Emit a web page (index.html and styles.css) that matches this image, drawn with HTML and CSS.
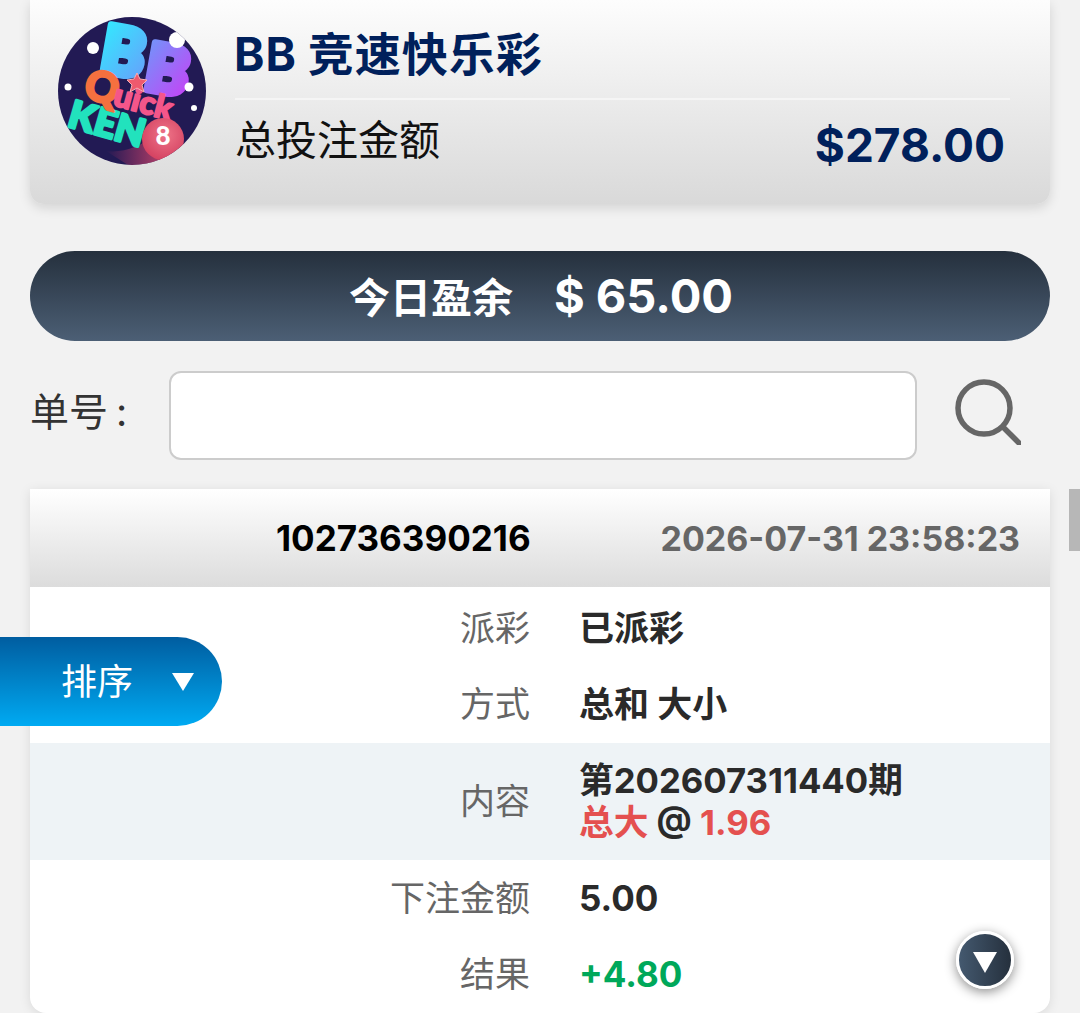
FILE: index.html
```html
<!DOCTYPE html>
<html lang="zh-CN">
<head>
<meta charset="utf-8">
<title>BB 竞速快乐彩</title>
<link rel="stylesheet" href="styles.css">
</head>
<body>
<main class="page">
  <section class="summary">
    <svg class="logo" viewBox="0 0 148 148" aria-label="BB Quick KENO">
      <defs>
        <linearGradient id="bbOne" x1="0" y1="0" x2="1" y2="1">
          <stop offset="0" stop-color="#2ef0ff"/><stop offset="1" stop-color="#6a9cfb"/>
        </linearGradient>
        <linearGradient id="bbTwo" x1="0" y1="0" x2="1" y2="1">
          <stop offset="0" stop-color="#6a9cfb"/><stop offset="1" stop-color="#cc3cf5"/>
        </linearGradient>
        <radialGradient id="ball" cx=".55" cy=".4" r=".65">
          <stop offset="0" stop-color="#ee7488"/><stop offset="1" stop-color="#d33f5f"/>
        </radialGradient>
        <linearGradient id="trail" x1="0" y1="0" x2="1" y2="0">
          <stop offset="0" stop-color="#d33f6a" stop-opacity="0"/><stop offset="1" stop-color="#d84a6c"/>
        </linearGradient>
        <clipPath id="round"><circle cx="74" cy="74" r="74"/></clipPath>
      </defs>
      <g clip-path="url(#round)">
        <rect width="148" height="148" fill="#221a54"/>
        <path d="M48 134 C66 136 82 130 100 116 L118 148 L70 148Z" fill="url(#trail)"/>
        <text class="logo-bb" transform="translate(40 54) rotate(10)" fill="url(#bbOne)" stroke="url(#bbOne)">B</text>
        <text class="logo-bb" transform="translate(84 72) rotate(10)" fill="url(#bbTwo)" stroke="url(#bbTwo)">B</text>
        <text class="logo-ken" transform="translate(8 109) rotate(16)">KEN</text>
        <g transform="translate(24 80) rotate(15)">
          <text class="logo-q">Q</text>
          <text class="logo-uick" x="31">uick</text>
        </g>
        <polygon points="79,56 82,62 89,63 84,68 86,75 79,71 72,75 74,68 69,63 76,62" fill="#ef5a6e" stroke="#f7b0b4" stroke-width="1"/>
        <circle cx="105" cy="122" r="21" fill="url(#ball)"/>
        <text class="logo-eight" x="105" y="128">8</text>
        <circle cx="35" cy="31" r="6" fill="#fff"/><circle cx="119" cy="23" r="8" fill="#fff"/>
        <circle cx="10" cy="70" r="3.5" fill="#fff"/><circle cx="131" cy="70" r="4.5" fill="#fff"/><circle cx="136" cy="91" r="3" fill="#fff"/>
      </g>
    </svg>
    <div class="summary-body">
      <h1 class="game-title">BB 竞速快乐彩</h1>
      <div class="summary-row">
        <span class="summary-label">总投注金额</span>
        <span class="summary-amount">$278.00</span>
      </div>
    </div>
  </section>

  <section class="profit-bar">
    <span>今日盈余</span>
    <span class="profit-value">$ 65.00</span>
  </section>

  <form class="search">
    <label class="search-label" for="order">单号 :</label>
    <input class="search-input" id="order" type="text">
    <svg class="search-icon" viewBox="0 0 66 66" aria-hidden="true">
      <circle cx="29" cy="29" r="26" fill="none" stroke="#666" stroke-width="5.5"/>
      <path d="M48 48 L64 64" fill="none" stroke="#666" stroke-width="5.5" stroke-linecap="round"/>
    </svg>
  </form>

  <article class="record">
    <header class="record-head">
      <span class="record-id">102736390216</span>
      <time class="record-time">2026-07-31 23:58:23</time>
    </header>
    <dl class="record-rows">
      <div class="row"><dt>派彩</dt><dd>已派彩</dd></div>
      <div class="row"><dt>方式</dt><dd>总和 大小</dd></div>
      <div class="row row-shade"><dt>内容</dt><dd class="stack"><span>第202607311440期</span><span><b class="red">总大</b> @ <b class="red">1.96</b></span></dd></div>
      <div class="row"><dt>下注金额</dt><dd class="num">5.00</dd></div>
      <div class="row"><dt>结果</dt><dd class="num green">+4.80</dd></div>
    </dl>
  </article>
</main>

<div class="scroll-thumb"></div>
<button class="sort-btn" type="button"><span>排序</span><i class="sort-arrow"></i></button>
<button class="down-btn" type="button" aria-label="向下"><i class="down-arrow"></i></button>
</body>
</html>
```

FILE: styles.css
```css
* { box-sizing: border-box; }
html, body { margin: 0; height: 100%; overflow: hidden; }
body {
  background: #f2f2f2;
  font-family: Inter, "Noto Sans CJK SC", sans-serif;
  color: #222;
}
.page { padding: 0 30px; display: flex; flex-direction: column; }

.summary {
  height: 204px;
  display: flex;
  align-items: flex-start;
  padding: 17px 40px 0 28px;
  border-radius: 0 0 14px 14px;
  background: linear-gradient(#fdfdfd, #d9d9d9);
  box-shadow: 0 4px 12px rgba(0,0,0,.13);
}
.logo { width: 148px; height: 148px; flex: none; }
.logo text { font-family: Lato, Inter, sans-serif; font-weight: 900; stroke-linejoin: round; }
.logo-bb { font-size: 66px; stroke-width: 7px; }
.logo-q { font-size: 42px; fill: #f5703f; stroke: #f5703f; stroke-width: 2.5px; }
.logo-uick { font-size: 32px; fill: #f4568a; stroke: #f4568a; stroke-width: 2px; }
.logo-ken { font-size: 38px; fill: #22e2bd; stroke: #22e2bd; stroke-width: 3px; }
.logo-eight { font-size: 26px; text-anchor: middle; fill: #fff; }
.summary-body { flex: 1; margin-left: 29px; }
.game-title {
  margin: 0;
  height: 83px;
  border-bottom: 2px solid #f5f5f5;
  font-size: 46px;
  line-height: 74px;
  font-weight: 700;
  color: #00205b;
  letter-spacing: 1px;
  text-indent: -1px;
  word-spacing: -1px;
}
.summary-row { display: flex; justify-content: space-between; padding-right: 5px; }
.summary-label { font-size: 41px; line-height: 80px; color: #111; }
.summary-amount { font-size: 46px; line-height: 90px; font-weight: 700; color: #00205b; }

.profit-bar {
  margin-top: 47px;
  height: 90px;
  padding: 0 0 2px 2px;
  border-radius: 45px;
  background: linear-gradient(#25303d, #4c5f75);
  color: #fff;
  display: flex;
  align-items: center;
  justify-content: center;
  gap: 41px;
  font-size: 41px;
  font-weight: 700;
}
.profit-value { font-size: 47px; }

.search { display: flex; align-items: center; margin-top: 29px; height: 90px; }
.search-label { width: 139px; padding: 0 0 12px; font-size: 39px; color: #333; word-spacing: -3px; }
.search-input {
  width: 748px;
  height: 89px;
  border: 2px solid #ccc;
  border-radius: 12px;
  background: #fff;
}
.search-icon { width: 66px; height: 66px; margin: -6px 0 0 38px; }

.record {
  margin-top: 29px;
  height: 524px;
  border-radius: 0 0 16px 16px;
  background: #fff;
  box-shadow: 0 2px 12px rgba(0,0,0,.1);
  overflow: hidden;
}
.record-head {
  height: 98px;
  display: flex;
  align-items: center;
  justify-content: space-between;
  padding: 0 30px 0 246px;
  background: linear-gradient(#fff, #dcdcdc);
  font-size: 35px;
  font-weight: 700;
}
.record-id { color: #000; }
.record-time { color: #666; font-size: 34px; }
.record-rows { margin: 3px 0 0; }
.row { display: grid; grid-template-columns: 500px 1fr; column-gap: 49px; align-items: center; height: 76.5px; padding-bottom: 6px; }
.row-shade { height: 117px; background: #eef3f6; }
.row dt { text-align: right; font-size: 35px; color: #666; }
.row dd { margin: 0; font-size: 35px; font-weight: 700; color: #2a2a2a; }
.row dd.stack { display: flex; flex-direction: column; padding-top: 5px; font-size: 34.7px; line-height: 42px; }
.row dd.num { padding-top: 5px; }
.red { color: #e4504f; font-weight: 700; }
.row dd.green { color: #00a85a; }

.scroll-thumb { position: fixed; top: 489px; right: 0; width: 11px; height: 62px; background: #b7b7b7; }
.sort-btn {
  position: fixed;
  left: 0;
  top: 637px;
  width: 222px;
  height: 89px;
  border: 0;
  border-radius: 0 45px 45px 0;
  background: linear-gradient(#005da0, #00aaf2);
  color: #fff;
  font: 36px Inter, "Noto Sans CJK SC", sans-serif;
  display: flex;
  align-items: center;
  padding: 0 0 6px 61px;
  gap: 39px;
}
.sort-arrow { width: 0; height: 0; margin-top: 6px; border-left: 11px solid transparent; border-right: 11px solid transparent; border-top: 18px solid #fff; }
.down-btn {
  position: fixed;
  left: 956px;
  top: 931px;
  width: 58px;
  height: 58px;
  padding: 0;
  border: 3px solid #fff;
  border-radius: 50%;
  background: linear-gradient(to right, #44596f, #25303d);
  box-shadow: 0 3px 12px rgba(0,0,0,.45);
  display: flex;
  align-items: center;
  justify-content: center;
}
.down-arrow { width: 0; height: 0; margin-top: 4px; border-left: 12px solid transparent; border-right: 12px solid transparent; border-top: 21px solid #fff; }
```
